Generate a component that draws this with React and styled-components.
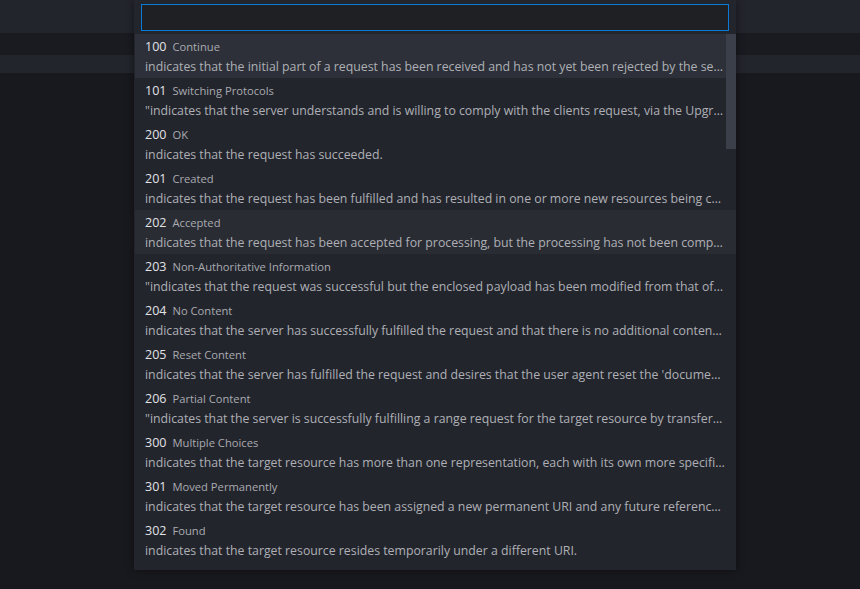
import React from "react";
import styled, { createGlobalStyle } from "styled-components";

const GlobalStyle = createGlobalStyle`
  html, body {
    margin: 0;
    padding: 0;
    background: #18191e;
    font-family: "Open Sans", "Noto Sans", sans-serif;
  }
`;

const statuses = [
  { code: "100", name: "Continue", desc: "indicates that the initial part of a request has been received and has not yet been rejected by the server." },
  { code: "101", name: "Switching Protocols", desc: "\"indicates that the server understands and is willing to comply with the clients request, via the Upgrade header field." },
  { code: "200", name: "OK", desc: "indicates that the request has succeeded." },
  { code: "201", name: "Created", desc: "indicates that the request has been fulfilled and has resulted in one or more new resources being created." },
  { code: "202", name: "Accepted", desc: "indicates that the request has been accepted for processing, but the processing has not been completed." },
  { code: "203", name: "Non-Authoritative Information", desc: "\"indicates that the request was successful but the enclosed payload has been modified from that of the origin server." },
  { code: "204", name: "No Content", desc: "indicates that the server has successfully fulfilled the request and that there is no additional content to send." },
  { code: "205", name: "Reset Content", desc: "indicates that the server has fulfilled the request and desires that the user agent reset the 'document view'." },
  { code: "206", name: "Partial Content", desc: "\"indicates that the server is successfully fulfilling a range request for the target resource by transferring parts." },
  { code: "300", name: "Multiple Choices", desc: "indicates that the target resource has more than one representation, each with its own more specific identifier." },
  { code: "301", name: "Moved Permanently", desc: "indicates that the target resource has been assigned a new permanent URI and any future references should use it." },
  { code: "302", name: "Found", desc: "indicates that the target resource resides temporarily under a different URI." },
];

const Page = styled.div`
  position: relative;
  width: 860px;
  height: 589px;
  overflow: hidden;
  display: flex;
  flex-direction: column;
`;

const Band = styled.div`
  height: ${(p) => p.h}px;
  background: ${(p) => p.bg};
`;

const Picker = styled.div`
  position: absolute;
  top: 0;
  left: 134px;
  width: 602px;
  background: #23252d;
  box-shadow: 0 0 8px rgba(0, 0, 0, 0.45);
  padding-bottom: 8px;
`;

const InputRow = styled.div`
  padding: 4px 7px 3px;
`;

const Input = styled.div`
  height: 25px;
  border: 1px solid #0a7ad6;
  background: #1f2024;
`;

const List = styled.div`
  position: relative;
  margin-left: 1px;
`;

const Item = styled.div`
  height: 44px;
  box-sizing: border-box;
  padding: 2px 10px 0 10px;
  background: ${(p) => (p.focused ? "#2d3039" : p.hover ? "#2a2c34" : "transparent")};
`;

const Head = styled.div`
  display: flex;
  align-items: baseline;
  gap: 6px;
  height: 21px;
  line-height: 21px;
  white-space: nowrap;
`;

const Code = styled.span`
  font-size: 12.5px;
  color: #e2e3e6;
`;

const Name = styled.span`
  font-size: 11.2px;
  color: #a9abb0;
`;

const Desc = styled.div`
  margin-top: 1px;
  font-size: 12.3px;
  line-height: 18px;
  color: #aeb0b5;
  white-space: nowrap;
  overflow: hidden;
  text-overflow: ellipsis;
  width: 580px;
`;

const Scrollbar = styled.div`
  position: absolute;
  top: 0;
  right: 0;
  width: 10px;
  height: 115px;
  background: #3b3f49;
`;

export default function App() {
  return (
    <Page>
      <GlobalStyle />
      <Band h={33} bg="#23252c" />
      <Band h={22} bg="#1a1b20" />
      <Band h={18} bg="#23252c" />
      <Picker>
        <InputRow>
          <Input />
        </InputRow>
        <List>
          {statuses.map((s, i) => (
            <Item key={s.code} focused={i === 0} hover={i === 4}>
              <Head>
                <Code>{s.code}</Code>
                <Name>{s.name}</Name>
              </Head>
              <Desc>{s.desc}</Desc>
            </Item>
          ))}
          <Scrollbar />
        </List>
      </Picker>
    </Page>
  );
}
